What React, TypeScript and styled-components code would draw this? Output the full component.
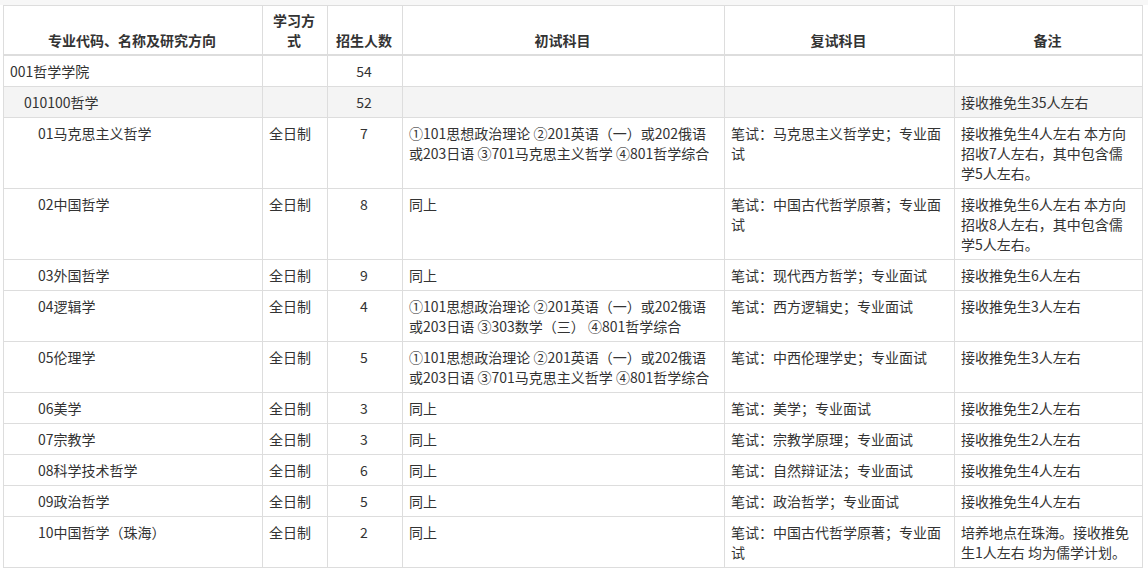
import React from "react";
import styled, { createGlobalStyle } from "styled-components";

const Global = createGlobalStyle`
  html, body { margin: 0; padding: 0; background: #fff; }
  body { font-family: "Noto Sans CJK SC", "Liberation Sans", sans-serif; color: #333; font-size: 14px; }
`;

const Page = styled.div`
  padding: 5px 6px 0 3px;
  background: linear-gradient(#f7f7f7 0 5px, #fff 5px);
`;

const Table = styled.table`
  border-collapse: collapse;
  table-layout: fixed;
  width: 1139px;
  background: #fff;
`;

const Th = styled.th`
  border: 1px solid #ddd;
  border-bottom: 2px solid #ddd;
  padding: 4px 8px 4px 6px;
  font-weight: bold;
  font-size: 14px;
  line-height: 20px;
  vertical-align: bottom;
  text-align: center;
  color: #333;
`;

const Tr = styled.tr<{ $shade?: boolean }>`
  background: ${(p) => (p.$shade ? "#f4f4f4" : "#fff")};
`;

const Td = styled.td<{ $indent?: number; $center?: boolean }>`
  border: 1px solid #ddd;
  padding: 5px 8px 5px ${(p) => 6 + (p.$indent ?? 0) * 14}px;
  line-height: 20px;
  font-size: 14px;
  vertical-align: top;
  text-align: ${(p) => (p.$center ? "center" : "left")};
`;

const s1 = "①101思想政治理论 ②201英语（一）或202俄语或203日语 ③701马克思主义哲学 ④801哲学综合";
const rows: [number, string, string, string, string, string, string][] = [
  [0, "001哲学学院", "", "54", "", "", ""],
  [1, "010100哲学", "", "52", "", "", "接收推免生35人左右"],
  [2, "01马克思主义哲学", "全日制", "7", s1, "笔试：马克思主义哲学史；专业面试", "接收推免生4人左右 本方向招收7人左右，其中包含儒学5人左右。"],
  [2, "02中国哲学", "全日制", "8", "同上", "笔试：中国古代哲学原著；专业面试", "接收推免生6人左右 本方向招收8人左右，其中包含儒学5人左右。"],
  [2, "03外国哲学", "全日制", "9", "同上", "笔试：现代西方哲学；专业面试", "接收推免生6人左右"],
  [2, "04逻辑学", "全日制", "4", "①101思想政治理论 ②201英语（一）或202俄语或203日语 ③303数学（三） ④801哲学综合", "笔试：西方逻辑史；专业面试", "接收推免生3人左右"],
  [2, "05伦理学", "全日制", "5", s1, "笔试：中西伦理学史；专业面试", "接收推免生3人左右"],
  [2, "06美学", "全日制", "3", "同上", "笔试：美学；专业面试", "接收推免生2人左右"],
  [2, "07宗教学", "全日制", "3", "同上", "笔试：宗教学原理；专业面试", "接收推免生2人左右"],
  [2, "08科学技术哲学", "全日制", "6", "同上", "笔试：自然辩证法；专业面试", "接收推免生4人左右"],
  [2, "09政治哲学", "全日制", "5", "同上", "笔试：政治哲学；专业面试", "接收推免生4人左右"],
  [2, "10中国哲学（珠海）", "全日制", "2", "同上", "笔试：中国古代哲学原著；专业面试", "培养地点在珠海。接收推免生1人左右 均为儒学计划。"],
];

export default function App() {
  return (
    <Page>
      <Global />
      <Table>
        <colgroup>
          <col style={{ width: 259 }} />
          <col style={{ width: 65 }} />
          <col style={{ width: 75 }} />
          <col style={{ width: 322 }} />
          <col style={{ width: 230 }} />
          <col style={{ width: 188 }} />
        </colgroup>
        <thead>
          <tr>
            <Th>专业代码、名称及研究方向</Th>
            <Th>学习方式</Th>
            <Th>招生人数</Th>
            <Th>初试科目</Th>
            <Th>复试科目</Th>
            <Th>备注</Th>
          </tr>
        </thead>
        <tbody>
          {rows.map((r, i) => (
            <Tr key={i} $shade={i === 1}>
              <Td $indent={r[0]}>{r[1]}</Td>
              <Td>{r[2]}</Td>
              <Td $center>{r[3]}</Td>
              <Td>{r[4]}</Td>
              <Td>{r[5]}</Td>
              <Td>{r[6]}</Td>
            </Tr>
          ))}
        </tbody>
      </Table>
    </Page>
  );
}
